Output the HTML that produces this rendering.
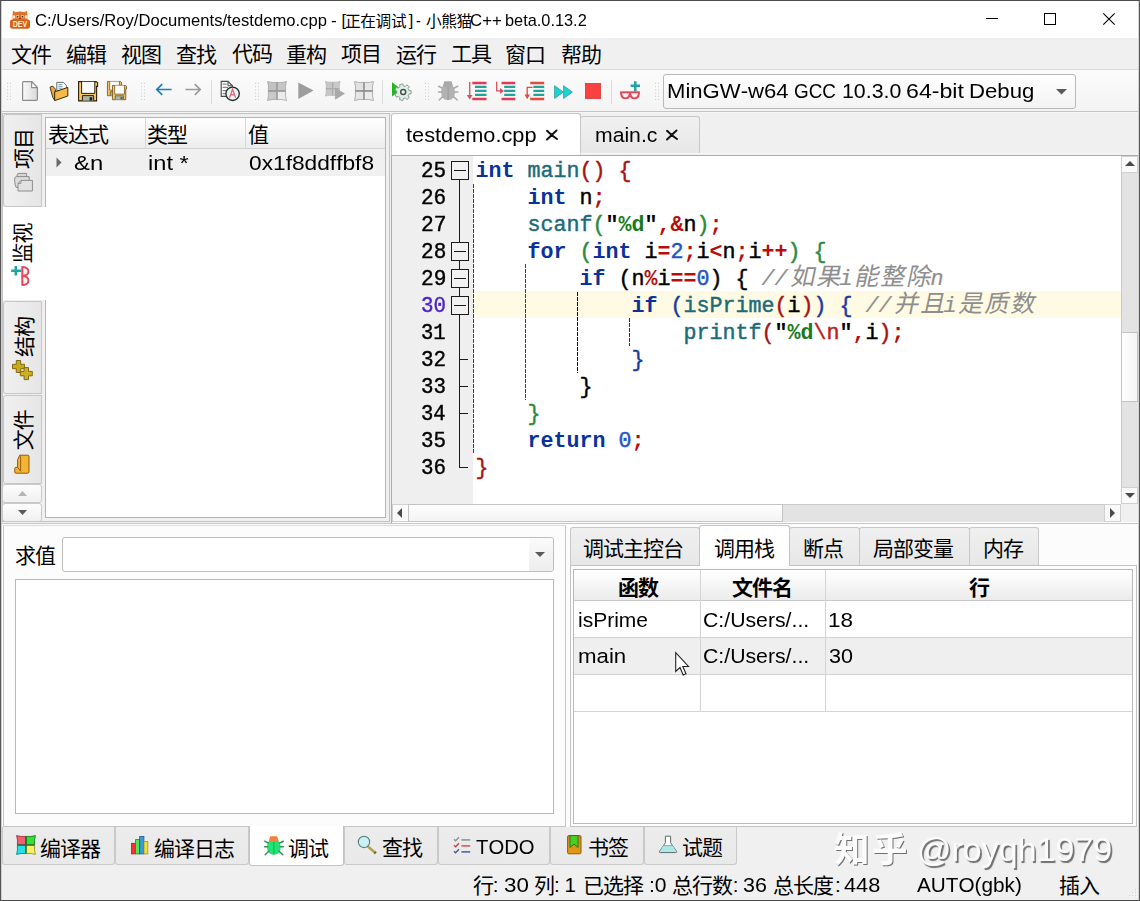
<!DOCTYPE html>
<html lang="zh"><head><meta charset="utf-8"><title>Red Panda C++</title>
<style>
html,body{margin:0;padding:0;}
body{width:1140px;height:901px;position:relative;overflow:hidden;background:#f0f0f0;font-family:"Liberation Sans",sans-serif;font-kerning:none;}
#w{position:absolute;left:0;top:0;width:1140px;height:901px;overflow:hidden;}
#w div{position:absolute;box-sizing:border-box;}
.t{position:absolute;white-space:pre;font-kerning:none;transform-origin:0 50%;}
.c{position:absolute;overflow:visible;}
.cj{font-family:"Liberation Sans","Noto Sans CJK SC",sans-serif;}
.ck{font-family:"Liberation Mono","Noto Sans CJK SC",sans-serif;}
</style></head><body>
<div id="w">
<div style="left:0px;top:0px;width:1140px;height:38px;background:#fff"></div>
<div style="left:0px;top:38px;width:1140px;height:31px;background:#f0f0f0"></div>
<div style="left:0px;top:69px;width:1140px;height:1px;background:#dadada"></div>
<div style="left:0px;top:70px;width:1140px;height:41px;background:linear-gradient(#fbfbfb,#f4f4f4)"></div>
<div style="left:0px;top:111px;width:1140px;height:1px;background:#c4c4c4"></div>
<div style="left:0px;top:112px;width:1140px;height:1px;background:#f6f6f6"></div>
<span class="t" style="left:34.96px;top:12.11px;font-size:16.4px;line-height:16.4px;transform:scaleX(1.0140);color:#000;font-family:'Liberation Sans',sans-serif;">C:/Users/Roy/Documents/testdemo.cpp</span>
<span class="t" style="left:331.24px;top:12.11px;font-size:16.4px;line-height:16.4px;transform:scaleX(1.0490);color:#000;font-family:'Liberation Sans',sans-serif;">-</span>
<span class="t" style="left:341.43px;top:12.11px;font-size:16.4px;line-height:16.4px;color:#000;font-family:'Liberation Sans',sans-serif;">[</span>
<svg class="c" style="left:345.18px;top:11.19px;" width="64.74" height="20.41" viewBox="0 -1000 4124 1300" fill="#000"><text class="cj" x="0" y="0" font-size="1000" letter-spacing="-25">正在调试</text></svg>
<span class="t" style="left:408.77px;top:12.11px;font-size:16.4px;line-height:16.4px;color:#000;font-family:'Liberation Sans',sans-serif;">]</span>
<span class="t" style="left:416.14px;top:12.11px;font-size:16.4px;line-height:16.4px;transform:scaleX(0.8991);color:#000;font-family:'Liberation Sans',sans-serif;">-</span>
<svg class="c" style="left:425.50px;top:11.31px;" width="49.44" height="20.41" viewBox="0 -1000 3149 1300" fill="#000"><text class="cj" x="0" y="0" font-size="1000" letter-spacing="-25">小熊猫</text></svg>
<span class="t" style="left:469.55px;top:12.11px;font-size:16.4px;line-height:16.4px;transform:scaleX(1.0253);color:#000;font-family:'Liberation Sans',sans-serif;">C++</span>
<span class="t" style="left:505.25px;top:12.11px;font-size:16.4px;line-height:16.4px;transform:scaleX(0.9964);color:#000;font-family:'Liberation Sans',sans-serif;">beta.0.13.2</span>
<div style="left:986px;top:18px;width:12px;height:1px;background:#000"></div>
<div style="left:1044px;top:13px;width:12px;height:12px;border:1px solid #000"></div>
<svg class="c" style="left:1103px;top:13px;" width="12" height="12" viewBox="0 0 12 12"><path d="M0.3 0.3L11.7 11.7M11.7 0.3L0.3 11.7" stroke="#000" stroke-width="1.1" fill="none"/></svg>
<svg class="c" style="left:11.24px;top:40.79px;" width="45.20" height="27.30" viewBox="0 -1000 2152 1300" fill="#000"><text class="cj" x="0" y="0" font-size="1000" letter-spacing="-48">文件</text></svg>
<svg class="c" style="left:66.20px;top:40.77px;" width="45.20" height="27.30" viewBox="0 -1000 2152 1300" fill="#000"><text class="cj" x="0" y="0" font-size="1000" letter-spacing="-48">编辑</text></svg>
<svg class="c" style="left:121.18px;top:40.60px;" width="45.20" height="27.30" viewBox="0 -1000 2152 1300" fill="#000"><text class="cj" x="0" y="0" font-size="1000" letter-spacing="-48">视图</text></svg>
<svg class="c" style="left:176.24px;top:40.64px;" width="45.20" height="27.30" viewBox="0 -1000 2152 1300" fill="#000"><text class="cj" x="0" y="0" font-size="1000" letter-spacing="-48">查找</text></svg>
<svg class="c" style="left:231.56px;top:40.43px;" width="45.20" height="27.30" viewBox="0 -1000 2152 1300" fill="#000"><text class="cj" x="0" y="0" font-size="1000" letter-spacing="-48">代码</text></svg>
<svg class="c" style="left:285.91px;top:40.64px;" width="45.20" height="27.30" viewBox="0 -1000 2152 1300" fill="#000"><text class="cj" x="0" y="0" font-size="1000" letter-spacing="-48">重构</text></svg>
<svg class="c" style="left:341.39px;top:39.72px;" width="45.20" height="27.30" viewBox="0 -1000 2152 1300" fill="#000"><text class="cj" x="0" y="0" font-size="1000" letter-spacing="-48">项目</text></svg>
<svg class="c" style="left:396.22px;top:40.66px;" width="45.20" height="27.30" viewBox="0 -1000 2152 1300" fill="#000"><text class="cj" x="0" y="0" font-size="1000" letter-spacing="-48">运行</text></svg>
<svg class="c" style="left:450.91px;top:39.63px;" width="45.20" height="27.30" viewBox="0 -1000 2152 1300" fill="#000"><text class="cj" x="0" y="0" font-size="1000" letter-spacing="-48">工具</text></svg>
<svg class="c" style="left:505.38px;top:40.74px;" width="45.20" height="27.30" viewBox="0 -1000 2152 1300" fill="#000"><text class="cj" x="0" y="0" font-size="1000" letter-spacing="-48">窗口</text></svg>
<svg class="c" style="left:560.95px;top:40.64px;" width="45.20" height="27.30" viewBox="0 -1000 2152 1300" fill="#000"><text class="cj" x="0" y="0" font-size="1000" letter-spacing="-48">帮助</text></svg>
<div style="left:663px;top:74px;width:413px;height:35px;border:1px solid #b9b9b9;border-radius:3px;background:linear-gradient(#ffffff,#f3f3f3)"></div>
<span class="t" style="left:667.19px;top:81.24px;font-size:20.5px;line-height:20.5px;transform:scaleX(1.0780);color:#000;font-family:'Liberation Sans',sans-serif;">MinGW-w64</span>
<span class="t" style="left:794.15px;top:81.24px;font-size:20.5px;line-height:20.5px;transform:scaleX(0.9213);color:#000;font-family:'Liberation Sans',sans-serif;">GCC</span>
<span class="t" style="left:841.98px;top:81.24px;font-size:20.5px;line-height:20.5px;transform:scaleX(1.0397);color:#000;font-family:'Liberation Sans',sans-serif;">10.3.0</span>
<span class="t" style="left:905.72px;top:81.24px;font-size:20.5px;line-height:20.5px;transform:scaleX(1.1300);color:#000;font-family:'Liberation Sans',sans-serif;">64-bit</span>
<span class="t" style="left:968.88px;top:81.24px;font-size:20.5px;line-height:20.5px;transform:scaleX(1.0818);color:#000;font-family:'Liberation Sans',sans-serif;">Debug</span>
<svg class="c" style="left:1056px;top:89px;" width="11" height="6" viewBox="0 0 11 6"><path d="M0 0H11L5.5 5.5Z" fill="#5a5a5a"/></svg>
<div style="left:2px;top:113px;width:388px;height:409px;border:1px solid #c2c2c2;background:#f0f0f0"></div>
<div style="left:45px;top:117px;width:341px;height:401px;border:1px solid #b4b4b4;background:#fff"></div>
<div style="left:46px;top:118px;width:339px;height:30px;background:linear-gradient(#ffffff 0%,#f9f9f9 40%,#ececec 100%)"></div>
<div style="left:46px;top:148px;width:339px;height:1px;background:#d2d2d2"></div>
<div style="left:145px;top:118px;width:1px;height:30px;background:#d8d8d8"></div>
<div style="left:245px;top:118px;width:1px;height:30px;background:#d8d8d8"></div>
<div style="left:46px;top:149px;width:339px;height:27px;background:#f0f0f0"></div>
<svg class="c" style="left:47.64px;top:120.54px;" width="65.20" height="27.30" viewBox="0 -1000 3105 1300" fill="#000"><text class="cj" x="0" y="0" font-size="1000" letter-spacing="-48">表达式</text></svg>
<svg class="c" style="left:147.03px;top:120.52px;" width="45.20" height="27.30" viewBox="0 -1000 2152 1300" fill="#000"><text class="cj" x="0" y="0" font-size="1000" letter-spacing="-48">类型</text></svg>
<svg class="c" style="left:248.33px;top:120.54px;" width="25.20" height="27.30" viewBox="0 -1000 1200 1300" fill="#000"><text class="cj" x="0" y="0" font-size="1000">值</text></svg>
<svg class="c" style="left:56px;top:157px;" width="6" height="11" viewBox="0 0 6 11"><path d="M0.5 0.5L5.5 5.5L0.5 10.5Z" fill="#6a6a6a"/></svg>
<span class="t" style="left:74.16px;top:152.84px;font-size:20.5px;line-height:20.5px;transform:scaleX(1.1641);color:#000;font-family:'Liberation Sans',sans-serif;">&amp;n</span>
<span class="t" style="left:147.52px;top:152.84px;font-size:20.5px;line-height:20.5px;transform:scaleX(1.1536);color:#000;font-family:'Liberation Sans',sans-serif;">int *</span>
<span class="t" style="left:249.01px;top:152.84px;font-size:20.5px;line-height:20.5px;transform:scaleX(1.1084);color:#000;font-family:'Liberation Sans',sans-serif;">0x1f8ddffbf8</span>
<div style="left:3px;top:114px;width:39px;height:93px;background:linear-gradient(90deg,#f0f0f0,#e6e6e6);border:1px solid #c6c6c6;border-radius:3px 0 0 3px"></div>
<div style="left:2px;top:207px;width:44px;height:93px;background:#fff;border-left:1px solid #c2c2c2"></div>
<div style="left:3px;top:301px;width:39px;height:93px;background:linear-gradient(90deg,#f0f0f0,#e6e6e6);border:1px solid #c6c6c6;border-radius:3px 0 0 3px"></div>
<div style="left:3px;top:395px;width:39px;height:89px;background:linear-gradient(90deg,#f0f0f0,#e6e6e6);border:1px solid #c6c6c6;border-radius:3px 0 0 3px"></div>
<svg class="c" style="left:0;top:0" width="50" height="530" fill="#000"><text class="cj" transform="translate(31.02,169.08) rotate(-90)" font-size="21" letter-spacing="-1">项目</text></svg>
<svg class="c" style="left:0;top:0" width="50" height="530" fill="#000"><text class="cj" transform="translate(30.10,263.56) rotate(-90)" font-size="21" letter-spacing="-1">监视</text></svg>
<svg class="c" style="left:0;top:0" width="50" height="530" fill="#000"><text class="cj" transform="translate(31.66,357.00) rotate(-90)" font-size="21" letter-spacing="-1">结构</text></svg>
<svg class="c" style="left:0;top:0" width="50" height="530" fill="#000"><text class="cj" transform="translate(31.39,450.31) rotate(-90)" font-size="21" letter-spacing="-1">文件</text></svg>
<div style="left:2px;top:484px;width:40px;height:19px;border:1px solid #c9c9c9;border-radius:3px;background:linear-gradient(#fdfdfd,#f0f0f0)"></div>
<div style="left:2px;top:503px;width:40px;height:19px;border:1px solid #c9c9c9;border-radius:3px;background:linear-gradient(#fdfdfd,#f0f0f0)"></div>
<svg class="c" style="left:17.5px;top:490.5px;" width="9" height="5" viewBox="0 0 9 5"><path d="M0 5H9L4.5 0Z" fill="#b4b4b4"/></svg>
<svg class="c" style="left:18px;top:509.5px;" width="9" height="5" viewBox="0 0 9 5"><path d="M0 0H9L4.5 5Z" fill="#5a5a5a"/></svg>
<div style="left:391px;top:113px;width:190px;height:43px;background:#fff;border:1px solid #c4c4c4;border-bottom:none;border-radius:3px 3px 0 0"></div>
<div style="left:580px;top:116px;width:120px;height:38px;background:linear-gradient(#f0f0f0,#e7e7e7);border:1px solid #c8c8c8;border-bottom:none;border-radius:3px 3px 0 0"></div>
<div style="left:580px;top:153px;width:560px;height:1px;background:#f4f4f4"></div>
<span class="t" style="left:406.37px;top:125.14px;font-size:20.5px;line-height:20.5px;transform:scaleX(1.0607);color:#000;font-family:'Liberation Sans',sans-serif;">testdemo.cpp</span>
<span class="t" style="left:594.59px;top:125.14px;font-size:20.5px;line-height:20.5px;transform:scaleX(1.0329);color:#000;font-family:'Liberation Sans',sans-serif;">main.c</span>
<svg class="c" style="left:546px;top:129.5px;" width="12" height="10" viewBox="0 0 12 10"><path d="M1 0.8C4 3.5 7 6.5 11 9M10.5 0.5C7.5 3 4.5 6.5 1 9.5" stroke="#111" stroke-width="2" fill="none" stroke-linecap="round"/></svg>
<svg class="c" style="left:666px;top:129.5px;" width="12" height="10" viewBox="0 0 12 10"><path d="M1 0.8C4 3.5 7 6.5 11 9M10.5 0.5C7.5 3 4.5 6.5 1 9.5" stroke="#111" stroke-width="2" fill="none" stroke-linecap="round"/></svg>
<div style="left:391px;top:155px;width:748px;height:368px;border:1px solid #adadad;border-right:none;border-bottom:none;background:#fff"></div>
<div style="left:392px;top:156px;width:81px;height:348px;background:#efefef"></div>
<div style="left:474px;top:291px;width:647px;height:27px;background:#fffae3"></div>
<div style="left:1121px;top:156px;width:17px;height:348px;background:#e3e3e3;border-left:1px solid #c9c9c9"></div>
<div style="left:1121px;top:156px;width:17px;height:17px;background:#fafafa;border:1px solid #d0d0d0"></div>
<div style="left:1121px;top:487px;width:17px;height:17px;background:#fafafa;border:1px solid #d0d0d0"></div>
<div style="left:1121px;top:332px;width:17px;height:70px;background:linear-gradient(90deg,#ffffff,#f4f4f4);border:1px solid #c4c4c4"></div>
<svg class="c" style="left:1125px;top:161px;" width="10" height="5" viewBox="0 0 10 5"><path d="M0 5H10L5 0Z" fill="#4a4a4a"/></svg>
<svg class="c" style="left:1125px;top:493px;" width="10" height="5" viewBox="0 0 10 5"><path d="M0 0H10L5 5Z" fill="#4a4a4a"/></svg>
<div style="left:392px;top:504px;width:729px;height:18px;background:#e3e3e3;border-top:1px solid #c9c9c9"></div>
<div style="left:392px;top:504px;width:17px;height:18px;background:#fafafa;border:1px solid #d0d0d0"></div>
<div style="left:1104px;top:504px;width:17px;height:18px;background:#fafafa;border:1px solid #d0d0d0"></div>
<div style="left:408px;top:504px;width:375px;height:18px;background:linear-gradient(#ffffff,#f3f3f3);border:1px solid #c4c4c4"></div>
<svg class="c" style="left:397px;top:508px;" width="5" height="10" viewBox="0 0 5 10"><path d="M5 0V10L0 5Z" fill="#4a4a4a"/></svg>
<svg class="c" style="left:1110px;top:508px;" width="5" height="10" viewBox="0 0 5 10"><path d="M0 0V10L5 5Z" fill="#4a4a4a"/></svg>
<div style="left:1121px;top:504px;width:17px;height:18px;background:#f0f0f0"></div>
<span class="t" style="left:421.12px;top:160.70px;font-size:21.667px;line-height:21.667px;transform:scaleX(0.9695);color:#000;font-family:'Liberation Mono',monospace;-webkit-text-stroke:0.4px;">25</span>
<span class="t" style="left:421.12px;top:187.70px;font-size:21.667px;line-height:21.667px;transform:scaleX(0.9708);color:#000;font-family:'Liberation Mono',monospace;-webkit-text-stroke:0.4px;">26</span>
<span class="t" style="left:421.10px;top:214.70px;font-size:21.667px;line-height:21.667px;transform:scaleX(0.9830);color:#000;font-family:'Liberation Mono',monospace;-webkit-text-stroke:0.4px;">27</span>
<span class="t" style="left:421.12px;top:241.70px;font-size:21.667px;line-height:21.667px;transform:scaleX(0.9717);color:#000;font-family:'Liberation Mono',monospace;-webkit-text-stroke:0.4px;">28</span>
<span class="t" style="left:421.11px;top:268.70px;font-size:21.667px;line-height:21.667px;transform:scaleX(0.9748);color:#000;font-family:'Liberation Mono',monospace;-webkit-text-stroke:0.4px;">29</span>
<span class="t" style="left:421.30px;top:295.70px;font-size:21.667px;line-height:21.667px;transform:scaleX(0.9607);color:#4a1fc8;font-family:'Liberation Mono',monospace;-webkit-text-stroke:0.4px;">30</span>
<span class="t" style="left:421.31px;top:322.70px;font-size:21.667px;line-height:21.667px;transform:scaleX(0.9490);color:#000;font-family:'Liberation Mono',monospace;-webkit-text-stroke:0.4px;">31</span>
<span class="t" style="left:421.29px;top:349.70px;font-size:21.667px;line-height:21.667px;transform:scaleX(0.9690);color:#000;font-family:'Liberation Mono',monospace;-webkit-text-stroke:0.4px;">32</span>
<span class="t" style="left:421.30px;top:376.70px;font-size:21.667px;line-height:21.667px;transform:scaleX(0.9624);color:#000;font-family:'Liberation Mono',monospace;-webkit-text-stroke:0.4px;">33</span>
<span class="t" style="left:421.31px;top:403.70px;font-size:21.667px;line-height:21.667px;transform:scaleX(0.9512);color:#000;font-family:'Liberation Mono',monospace;-webkit-text-stroke:0.4px;">34</span>
<span class="t" style="left:421.30px;top:430.70px;font-size:21.667px;line-height:21.667px;transform:scaleX(0.9624);color:#000;font-family:'Liberation Mono',monospace;-webkit-text-stroke:0.4px;">35</span>
<span class="t" style="left:421.29px;top:457.70px;font-size:21.667px;line-height:21.667px;transform:scaleX(0.9637);color:#000;font-family:'Liberation Mono',monospace;-webkit-text-stroke:0.4px;">36</span>
<div style="left:459px;top:180px;width:1px;height:288px;background:#1a1a1a"></div>
<div style="left:451px;top:161px;width:18px;height:19px;border:1px solid #1a1a1a;background:#f1f1f1"></div>
<div style="left:454px;top:170px;width:12px;height:1px;background:#1a1a1a"></div>
<div style="left:451px;top:242px;width:18px;height:19px;border:1px solid #1a1a1a;background:#f1f1f1"></div>
<div style="left:454px;top:251px;width:12px;height:1px;background:#1a1a1a"></div>
<div style="left:451px;top:269px;width:18px;height:19px;border:1px solid #1a1a1a;background:#f1f1f1"></div>
<div style="left:454px;top:278px;width:12px;height:1px;background:#1a1a1a"></div>
<div style="left:451px;top:296px;width:18px;height:19px;border:1px solid #1a1a1a;background:#f1f1f1"></div>
<div style="left:454px;top:305px;width:12px;height:1px;background:#1a1a1a"></div>
<div style="left:460px;top:359px;width:8px;height:1px;background:#1a1a1a"></div>
<div style="left:460px;top:386px;width:8px;height:1px;background:#1a1a1a"></div>
<div style="left:460px;top:413px;width:8px;height:1px;background:#1a1a1a"></div>
<div style="left:460px;top:467px;width:8px;height:1px;background:#1a1a1a"></div>
<div style="left:473px;top:184px;width:1px;height:270px;background:repeating-linear-gradient(#85202c 0 3.8px,transparent 3.8px 5px)"></div>
<div style="left:525px;top:264px;width:1px;height:136px;background:repeating-linear-gradient(#1f5a2f 0 3.8px,transparent 3.8px 5px)"></div>
<div style="left:577px;top:292px;width:1px;height:81px;background:repeating-linear-gradient(#111 0 3.8px,transparent 3.8px 5px)"></div>
<div style="left:629px;top:318px;width:1px;height:28px;background:repeating-linear-gradient(#1a2f7a 0 3.8px,transparent 3.8px 5px)"></div>
<span class="t" style="left:475.60px;top:160.70px;font-size:21.667px;line-height:21.667px;color:#0a329a;font-family:'Liberation Mono',monospace;font-weight:bold;">int</span>
<span class="t" style="left:527.60px;top:160.70px;font-size:21.667px;line-height:21.667px;color:#1b6b7a;font-family:'Liberation Mono',monospace;-webkit-text-stroke:0.45px;">main</span>
<span class="t" style="left:579.60px;top:160.70px;font-size:21.667px;line-height:21.667px;color:#a31515;font-family:'Liberation Mono',monospace;-webkit-text-stroke:0.45px;">()</span>
<span class="t" style="left:618.60px;top:160.70px;font-size:21.667px;line-height:21.667px;color:#a31515;font-family:'Liberation Mono',monospace;-webkit-text-stroke:0.45px;">{</span>
<span class="t" style="left:527.60px;top:187.70px;font-size:21.667px;line-height:21.667px;color:#0a329a;font-family:'Liberation Mono',monospace;font-weight:bold;">int</span>
<span class="t" style="left:579.60px;top:187.70px;font-size:21.667px;line-height:21.667px;color:#000;font-family:'Liberation Mono',monospace;-webkit-text-stroke:0.45px;">n</span>
<span class="t" style="left:592.60px;top:187.70px;font-size:21.667px;line-height:21.667px;color:#b80d0d;font-family:'Liberation Mono',monospace;font-weight:bold;">;</span>
<span class="t" style="left:527.60px;top:214.70px;font-size:21.667px;line-height:21.667px;color:#1b6b7a;font-family:'Liberation Mono',monospace;-webkit-text-stroke:0.45px;">scanf</span>
<span class="t" style="left:592.60px;top:214.70px;font-size:21.667px;line-height:21.667px;color:#2a8a3e;font-family:'Liberation Mono',monospace;-webkit-text-stroke:0.45px;">(</span>
<span class="t" style="left:605.60px;top:214.70px;font-size:21.667px;line-height:21.667px;color:#000;font-family:'Liberation Mono',monospace;font-weight:bold;">&quot;</span>
<span class="t" style="left:618.60px;top:214.70px;font-size:21.667px;line-height:21.667px;color:#1a7a1a;font-family:'Liberation Mono',monospace;font-weight:bold;">%d</span>
<span class="t" style="left:644.60px;top:214.70px;font-size:21.667px;line-height:21.667px;color:#000;font-family:'Liberation Mono',monospace;font-weight:bold;">&quot;</span>
<span class="t" style="left:657.60px;top:214.70px;font-size:21.667px;line-height:21.667px;color:#b80d0d;font-family:'Liberation Mono',monospace;font-weight:bold;">,&amp;</span>
<span class="t" style="left:683.60px;top:214.70px;font-size:21.667px;line-height:21.667px;color:#000;font-family:'Liberation Mono',monospace;-webkit-text-stroke:0.45px;">n</span>
<span class="t" style="left:696.60px;top:214.70px;font-size:21.667px;line-height:21.667px;color:#2a8a3e;font-family:'Liberation Mono',monospace;-webkit-text-stroke:0.45px;">)</span>
<span class="t" style="left:709.60px;top:214.70px;font-size:21.667px;line-height:21.667px;color:#b80d0d;font-family:'Liberation Mono',monospace;font-weight:bold;">;</span>
<span class="t" style="left:527.60px;top:241.70px;font-size:21.667px;line-height:21.667px;color:#0a329a;font-family:'Liberation Mono',monospace;font-weight:bold;">for</span>
<span class="t" style="left:579.60px;top:241.70px;font-size:21.667px;line-height:21.667px;color:#2a8a3e;font-family:'Liberation Mono',monospace;-webkit-text-stroke:0.45px;">(</span>
<span class="t" style="left:592.60px;top:241.70px;font-size:21.667px;line-height:21.667px;color:#0a329a;font-family:'Liberation Mono',monospace;font-weight:bold;">int</span>
<span class="t" style="left:644.60px;top:241.70px;font-size:21.667px;line-height:21.667px;color:#000;font-family:'Liberation Mono',monospace;-webkit-text-stroke:0.45px;">i</span>
<span class="t" style="left:657.60px;top:241.70px;font-size:21.667px;line-height:21.667px;color:#b80d0d;font-family:'Liberation Mono',monospace;font-weight:bold;">=</span>
<span class="t" style="left:670.60px;top:241.70px;font-size:21.667px;line-height:21.667px;color:#2453c4;font-family:'Liberation Mono',monospace;-webkit-text-stroke:0.45px;">2</span>
<span class="t" style="left:683.60px;top:241.70px;font-size:21.667px;line-height:21.667px;color:#b80d0d;font-family:'Liberation Mono',monospace;font-weight:bold;">;</span>
<span class="t" style="left:696.60px;top:241.70px;font-size:21.667px;line-height:21.667px;color:#000;font-family:'Liberation Mono',monospace;-webkit-text-stroke:0.45px;">i</span>
<span class="t" style="left:709.60px;top:241.70px;font-size:21.667px;line-height:21.667px;color:#b80d0d;font-family:'Liberation Mono',monospace;font-weight:bold;">&lt;</span>
<span class="t" style="left:722.60px;top:241.70px;font-size:21.667px;line-height:21.667px;color:#000;font-family:'Liberation Mono',monospace;-webkit-text-stroke:0.45px;">n</span>
<span class="t" style="left:735.60px;top:241.70px;font-size:21.667px;line-height:21.667px;color:#b80d0d;font-family:'Liberation Mono',monospace;font-weight:bold;">;</span>
<span class="t" style="left:748.60px;top:241.70px;font-size:21.667px;line-height:21.667px;color:#000;font-family:'Liberation Mono',monospace;-webkit-text-stroke:0.45px;">i</span>
<span class="t" style="left:761.60px;top:241.70px;font-size:21.667px;line-height:21.667px;color:#b80d0d;font-family:'Liberation Mono',monospace;font-weight:bold;">++</span>
<span class="t" style="left:787.60px;top:241.70px;font-size:21.667px;line-height:21.667px;color:#2a8a3e;font-family:'Liberation Mono',monospace;-webkit-text-stroke:0.45px;">)</span>
<span class="t" style="left:813.60px;top:241.70px;font-size:21.667px;line-height:21.667px;color:#2a8a3e;font-family:'Liberation Mono',monospace;-webkit-text-stroke:0.45px;">{</span>
<span class="t" style="left:579.60px;top:268.70px;font-size:21.667px;line-height:21.667px;color:#0a329a;font-family:'Liberation Mono',monospace;font-weight:bold;">if</span>
<span class="t" style="left:618.60px;top:268.70px;font-size:21.667px;line-height:21.667px;color:#000;font-family:'Liberation Mono',monospace;-webkit-text-stroke:0.45px;">(</span>
<span class="t" style="left:631.60px;top:268.70px;font-size:21.667px;line-height:21.667px;color:#000;font-family:'Liberation Mono',monospace;-webkit-text-stroke:0.45px;">n</span>
<span class="t" style="left:644.60px;top:268.70px;font-size:21.667px;line-height:21.667px;color:#b80d0d;font-family:'Liberation Mono',monospace;font-weight:bold;">%</span>
<span class="t" style="left:657.60px;top:268.70px;font-size:21.667px;line-height:21.667px;color:#000;font-family:'Liberation Mono',monospace;-webkit-text-stroke:0.45px;">i</span>
<span class="t" style="left:670.60px;top:268.70px;font-size:21.667px;line-height:21.667px;color:#b80d0d;font-family:'Liberation Mono',monospace;font-weight:bold;">==</span>
<span class="t" style="left:696.60px;top:268.70px;font-size:21.667px;line-height:21.667px;color:#2453c4;font-family:'Liberation Mono',monospace;-webkit-text-stroke:0.45px;">0</span>
<span class="t" style="left:709.60px;top:268.70px;font-size:21.667px;line-height:21.667px;color:#000;font-family:'Liberation Mono',monospace;-webkit-text-stroke:0.45px;">)</span>
<span class="t" style="left:735.60px;top:268.70px;font-size:21.667px;line-height:21.667px;color:#000;font-family:'Liberation Mono',monospace;-webkit-text-stroke:0.45px;">{</span>
<span class="t" style="left:761.60px;top:268.70px;font-size:21.667px;line-height:21.667px;color:#8e8e8e;font-family:'Liberation Mono',monospace;font-style:italic;-webkit-text-stroke:0.2px;">//</span>
<svg class="c" style="left:789.75px;top:261.40px;" width="55.28" height="31.72" viewBox="0 -1000 2266 1300" fill="#8e8e8e"><g transform="skewX(-12)"><text class="ck" x="0" y="0" font-size="1000" letter-spacing="66">如果</text></g></svg>
<span class="t" style="left:839.60px;top:268.70px;font-size:21.667px;line-height:21.667px;color:#8e8e8e;font-family:'Liberation Mono',monospace;font-style:italic;-webkit-text-stroke:0.2px;">i</span>
<svg class="c" style="left:854.26px;top:261.40px;" width="81.28" height="31.72" viewBox="0 -1000 3331 1300" fill="#8e8e8e"><g transform="skewX(-12)"><text class="ck" x="0" y="0" font-size="1000" letter-spacing="66">能整除</text></g></svg>
<span class="t" style="left:930.60px;top:268.70px;font-size:21.667px;line-height:21.667px;color:#8e8e8e;font-family:'Liberation Mono',monospace;font-style:italic;-webkit-text-stroke:0.2px;">n</span>
<span class="t" style="left:631.60px;top:295.70px;font-size:21.667px;line-height:21.667px;color:#0a329a;font-family:'Liberation Mono',monospace;font-weight:bold;">if</span>
<span class="t" style="left:670.60px;top:295.70px;font-size:21.667px;line-height:21.667px;color:#1a3a9e;font-family:'Liberation Mono',monospace;-webkit-text-stroke:0.45px;">(</span>
<span class="t" style="left:683.60px;top:295.70px;font-size:21.667px;line-height:21.667px;color:#1b6b7a;font-family:'Liberation Mono',monospace;-webkit-text-stroke:0.45px;">isPrime</span>
<span class="t" style="left:774.60px;top:295.70px;font-size:21.667px;line-height:21.667px;color:#a31515;font-family:'Liberation Mono',monospace;-webkit-text-stroke:0.45px;">(</span>
<span class="t" style="left:787.60px;top:295.70px;font-size:21.667px;line-height:21.667px;color:#000;font-family:'Liberation Mono',monospace;-webkit-text-stroke:0.45px;">i</span>
<span class="t" style="left:800.60px;top:295.70px;font-size:21.667px;line-height:21.667px;color:#a31515;font-family:'Liberation Mono',monospace;-webkit-text-stroke:0.45px;">)</span>
<span class="t" style="left:813.60px;top:295.70px;font-size:21.667px;line-height:21.667px;color:#1a3a9e;font-family:'Liberation Mono',monospace;-webkit-text-stroke:0.45px;">)</span>
<span class="t" style="left:839.60px;top:295.70px;font-size:21.667px;line-height:21.667px;color:#1a3a9e;font-family:'Liberation Mono',monospace;-webkit-text-stroke:0.45px;">{</span>
<span class="t" style="left:865.60px;top:295.70px;font-size:21.667px;line-height:21.667px;color:#8e8e8e;font-family:'Liberation Mono',monospace;font-style:italic;-webkit-text-stroke:0.2px;">//</span>
<svg class="c" style="left:893.58px;top:288.40px;" width="55.28" height="31.72" viewBox="0 -1000 2266 1300" fill="#8e8e8e"><g transform="skewX(-12)"><text class="ck" x="0" y="0" font-size="1000" letter-spacing="66">并且</text></g></svg>
<span class="t" style="left:943.60px;top:295.70px;font-size:21.667px;line-height:21.667px;color:#8e8e8e;font-family:'Liberation Mono',monospace;font-style:italic;-webkit-text-stroke:0.2px;">i</span>
<svg class="c" style="left:958.43px;top:288.40px;" width="81.28" height="31.72" viewBox="0 -1000 3331 1300" fill="#8e8e8e"><g transform="skewX(-12)"><text class="ck" x="0" y="0" font-size="1000" letter-spacing="66">是质数</text></g></svg>
<span class="t" style="left:683.60px;top:322.70px;font-size:21.667px;line-height:21.667px;color:#1b6b7a;font-family:'Liberation Mono',monospace;-webkit-text-stroke:0.45px;">printf</span>
<span class="t" style="left:761.60px;top:322.70px;font-size:21.667px;line-height:21.667px;color:#a31515;font-family:'Liberation Mono',monospace;-webkit-text-stroke:0.45px;">(</span>
<span class="t" style="left:774.60px;top:322.70px;font-size:21.667px;line-height:21.667px;color:#000;font-family:'Liberation Mono',monospace;font-weight:bold;">&quot;</span>
<span class="t" style="left:787.60px;top:322.70px;font-size:21.667px;line-height:21.667px;color:#1a7a1a;font-family:'Liberation Mono',monospace;font-weight:bold;">%d</span>
<span class="t" style="left:813.60px;top:322.70px;font-size:21.667px;line-height:21.667px;color:#c41a1a;font-family:'Liberation Mono',monospace;-webkit-text-stroke:0.45px;">\n</span>
<span class="t" style="left:839.60px;top:322.70px;font-size:21.667px;line-height:21.667px;color:#000;font-family:'Liberation Mono',monospace;font-weight:bold;">&quot;</span>
<span class="t" style="left:852.60px;top:322.70px;font-size:21.667px;line-height:21.667px;color:#b80d0d;font-family:'Liberation Mono',monospace;font-weight:bold;">,</span>
<span class="t" style="left:865.60px;top:322.70px;font-size:21.667px;line-height:21.667px;color:#000;font-family:'Liberation Mono',monospace;-webkit-text-stroke:0.45px;">i</span>
<span class="t" style="left:878.60px;top:322.70px;font-size:21.667px;line-height:21.667px;color:#a31515;font-family:'Liberation Mono',monospace;-webkit-text-stroke:0.45px;">)</span>
<span class="t" style="left:891.60px;top:322.70px;font-size:21.667px;line-height:21.667px;color:#b80d0d;font-family:'Liberation Mono',monospace;font-weight:bold;">;</span>
<span class="t" style="left:631.60px;top:349.70px;font-size:21.667px;line-height:21.667px;color:#1a3a9e;font-family:'Liberation Mono',monospace;-webkit-text-stroke:0.45px;">}</span>
<span class="t" style="left:579.60px;top:376.70px;font-size:21.667px;line-height:21.667px;color:#000;font-family:'Liberation Mono',monospace;-webkit-text-stroke:0.45px;">}</span>
<span class="t" style="left:527.60px;top:403.70px;font-size:21.667px;line-height:21.667px;color:#2a8a3e;font-family:'Liberation Mono',monospace;-webkit-text-stroke:0.45px;">}</span>
<span class="t" style="left:527.60px;top:430.70px;font-size:21.667px;line-height:21.667px;color:#0a329a;font-family:'Liberation Mono',monospace;font-weight:bold;">return</span>
<span class="t" style="left:618.60px;top:430.70px;font-size:21.667px;line-height:21.667px;color:#2453c4;font-family:'Liberation Mono',monospace;-webkit-text-stroke:0.45px;">0</span>
<span class="t" style="left:631.60px;top:430.70px;font-size:21.667px;line-height:21.667px;color:#b80d0d;font-family:'Liberation Mono',monospace;font-weight:bold;">;</span>
<span class="t" style="left:475.60px;top:457.70px;font-size:21.667px;line-height:21.667px;color:#a31515;font-family:'Liberation Mono',monospace;-webkit-text-stroke:0.45px;">}</span>
<div style="left:0px;top:523px;width:1140px;height:1px;background:#c6c6c6"></div>
<div style="left:2px;top:524px;width:1136px;height:303px;background:#fcfcfc"></div>
<div style="left:3px;top:525px;width:563px;height:302px;border:1px solid #c6c6c6;border-top-color:#dcdcdc;background:#fcfcfc"></div>
<svg class="c" style="left:14.50px;top:542.24px;" width="45.20" height="27.30" viewBox="0 -1000 2152 1300" fill="#000"><text class="cj" x="0" y="0" font-size="1000" letter-spacing="-48">求值</text></svg>
<div style="left:62px;top:537px;width:492px;height:35px;border:1px solid #bdbdbd;border-radius:3px;background:#fff"></div>
<div style="left:529px;top:538px;width:24px;height:33px;background:linear-gradient(#fbfbfb,#ededed);border-radius:0 3px 3px 0"></div>
<svg class="c" style="left:535px;top:552px;" width="10" height="5" viewBox="0 0 10 5"><path d="M0 0H10L5 5Z" fill="#5a5a5a"/></svg>
<div style="left:15px;top:579px;width:539px;height:235px;border:1px solid #b9b9b9;background:#fff"></div>
<div style="left:570px;top:565px;width:567px;height:262px;border:1px solid #c2c2c2;background:#fdfdfd"></div>
<div style="left:570px;top:527px;width:130px;height:38px;background:linear-gradient(#f0f0f0,#e7e7e7);border:1px solid #c8c8c8;border-bottom:none;border-radius:3px 3px 0 0"></div>
<div style="left:789px;top:527px;width:71px;height:38px;background:linear-gradient(#f0f0f0,#e7e7e7);border:1px solid #c8c8c8;border-bottom:none;border-radius:3px 3px 0 0"></div>
<div style="left:859px;top:527px;width:111px;height:38px;background:linear-gradient(#f0f0f0,#e7e7e7);border:1px solid #c8c8c8;border-bottom:none;border-radius:3px 3px 0 0"></div>
<div style="left:969px;top:527px;width:70px;height:38px;background:linear-gradient(#f0f0f0,#e7e7e7);border:1px solid #c8c8c8;border-bottom:none;border-radius:3px 3px 0 0"></div>
<div style="left:699px;top:525px;width:91px;height:41px;background:#fff;border:1px solid #c4c4c4;border-bottom:none;border-radius:3px 3px 0 0"></div>
<svg class="c" style="left:583.30px;top:534.72px;" width="105.20" height="27.30" viewBox="0 -1000 5010 1300" fill="#000"><text class="cj" x="0" y="0" font-size="1000" letter-spacing="-48">调试主控台</text></svg>
<svg class="c" style="left:714.30px;top:534.94px;" width="65.20" height="27.30" viewBox="0 -1000 3105 1300" fill="#000"><text class="cj" x="0" y="0" font-size="1000" letter-spacing="-48">调用栈</text></svg>
<svg class="c" style="left:802.84px;top:534.98px;" width="45.20" height="27.30" viewBox="0 -1000 2152 1300" fill="#000"><text class="cj" x="0" y="0" font-size="1000" letter-spacing="-48">断点</text></svg>
<svg class="c" style="left:873.21px;top:535.13px;" width="85.20" height="27.30" viewBox="0 -1000 4057 1300" fill="#000"><text class="cj" x="0" y="0" font-size="1000" letter-spacing="-48">局部变量</text></svg>
<svg class="c" style="left:982.62px;top:534.94px;" width="45.20" height="27.30" viewBox="0 -1000 2152 1300" fill="#000"><text class="cj" x="0" y="0" font-size="1000" letter-spacing="-48">内存</text></svg>
<div style="left:573px;top:569px;width:560px;height:255px;border:1px solid #b9b9b9;background:#fff"></div>
<div style="left:574px;top:570px;width:558px;height:30px;background:linear-gradient(#ffffff 0%,#f8f8f8 40%,#ebebeb 100%)"></div>
<div style="left:574px;top:600px;width:558px;height:1px;background:#c9c9c9"></div>
<div style="left:574px;top:638px;width:558px;height:36px;background:#efefef"></div>
<div style="left:574px;top:637px;width:558px;height:1px;background:#d4d4d4"></div>
<div style="left:574px;top:674px;width:558px;height:1px;background:#d4d4d4"></div>
<div style="left:574px;top:711px;width:558px;height:1px;background:#d4d4d4"></div>
<div style="left:700px;top:570px;width:1px;height:142px;background:#d4d4d4"></div>
<div style="left:825px;top:570px;width:1px;height:142px;background:#d4d4d4"></div>
<svg class="c" style="left:617.73px;top:573.85px;" width="45.20" height="27.30" viewBox="0 -1000 2152 1300" fill="#000"><text class="cj" x="0" y="0" font-size="1000" font-weight="bold" letter-spacing="-48">函数</text></svg>
<svg class="c" style="left:732.48px;top:574.06px;" width="65.20" height="27.30" viewBox="0 -1000 3105 1300" fill="#000"><text class="cj" x="0" y="0" font-size="1000" font-weight="bold" letter-spacing="-48">文件名</text></svg>
<svg class="c" style="left:969.18px;top:573.85px;" width="25.20" height="27.30" viewBox="0 -1000 1200 1300" fill="#000"><text class="cj" x="0" y="0" font-size="1000" font-weight="bold">行</text></svg>
<span class="t" style="left:578.29px;top:609.54px;font-size:20.5px;line-height:20.5px;transform:scaleX(1.0249);color:#000;font-family:'Liberation Sans',sans-serif;">isPrime</span>
<span class="t" style="left:578.22px;top:646.44px;font-size:20.5px;line-height:20.5px;transform:scaleX(1.0853);color:#000;font-family:'Liberation Sans',sans-serif;">main</span>
<span class="t" style="left:703.12px;top:609.54px;font-size:20.5px;line-height:20.5px;transform:scaleX(1.0362);color:#000;font-family:'Liberation Sans',sans-serif;">C:/Users/...</span>
<span class="t" style="left:703.12px;top:646.44px;font-size:20.5px;line-height:20.5px;transform:scaleX(1.0362);color:#000;font-family:'Liberation Sans',sans-serif;">C:/Users/...</span>
<span class="t" style="left:827.99px;top:609.54px;font-size:20.5px;line-height:20.5px;transform:scaleX(1.0958);color:#000;font-family:'Liberation Sans',sans-serif;">18</span>
<span class="t" style="left:828.88px;top:646.44px;font-size:20.5px;line-height:20.5px;transform:scaleX(1.0509);color:#000;font-family:'Liberation Sans',sans-serif;">30</span>
<svg class="c" style="left:675px;top:652px;" width="16" height="25" viewBox="0 0 16 25"><path d="M0.7 0.7V19.5L5 15.5L8.2 23L11 21.8L7.8 14.5H13.5Z" fill="#fff" stroke="#222" stroke-width="1.1" stroke-linejoin="miter"/></svg>
<div style="left:2px;top:827px;width:113px;height:38px;background:linear-gradient(#ececec,#e9e9e9);border:1px solid #c9c9c9;border-top:none;border-radius:0 0 3px 3px"></div>
<div style="left:115px;top:827px;width:134px;height:38px;background:linear-gradient(#ececec,#e9e9e9);border:1px solid #c9c9c9;border-top:none;border-radius:0 0 3px 3px"></div>
<div style="left:344px;top:827px;width:94px;height:38px;background:linear-gradient(#ececec,#e9e9e9);border:1px solid #c9c9c9;border-top:none;border-radius:0 0 3px 3px"></div>
<div style="left:438px;top:827px;width:112px;height:38px;background:linear-gradient(#ececec,#e9e9e9);border:1px solid #c9c9c9;border-top:none;border-radius:0 0 3px 3px"></div>
<div style="left:550px;top:827px;width:94px;height:38px;background:linear-gradient(#ececec,#e9e9e9);border:1px solid #c9c9c9;border-top:none;border-radius:0 0 3px 3px"></div>
<div style="left:644px;top:827px;width:93px;height:38px;background:linear-gradient(#ececec,#e9e9e9);border:1px solid #c9c9c9;border-top:none;border-radius:0 0 3px 3px"></div>
<div style="left:249px;top:826px;width:95px;height:40px;background:#fff;border:1px solid #c4c4c4;border-top:none;border-radius:0 0 3px 3px"></div>
<svg class="c" style="left:39.60px;top:834.67px;" width="65.20" height="27.30" viewBox="0 -1000 3105 1300" fill="#000"><text class="cj" x="0" y="0" font-size="1000" letter-spacing="-48">编译器</text></svg>
<svg class="c" style="left:153.60px;top:834.67px;" width="85.20" height="27.30" viewBox="0 -1000 4057 1300" fill="#000"><text class="cj" x="0" y="0" font-size="1000" letter-spacing="-48">编译日志</text></svg>
<svg class="c" style="left:288.10px;top:835.13px;" width="45.20" height="27.30" viewBox="0 -1000 2152 1300" fill="#000"><text class="cj" x="0" y="0" font-size="1000" letter-spacing="-48">调试</text></svg>
<svg class="c" style="left:381.54px;top:833.94px;" width="45.20" height="27.30" viewBox="0 -1000 2152 1300" fill="#000"><text class="cj" x="0" y="0" font-size="1000" letter-spacing="-48">查找</text></svg>
<span class="t" style="left:475.94px;top:836.84px;font-size:20.5px;line-height:20.5px;transform:scaleX(0.9883);color:#000;font-family:'Liberation Sans',sans-serif;">TODO</span>
<svg class="c" style="left:587.54px;top:834.04px;" width="45.20" height="27.30" viewBox="0 -1000 2152 1300" fill="#000"><text class="cj" x="0" y="0" font-size="1000" letter-spacing="-48">书签</text></svg>
<svg class="c" style="left:681.75px;top:833.83px;" width="45.20" height="27.30" viewBox="0 -1000 2152 1300" fill="#000"><text class="cj" x="0" y="0" font-size="1000" letter-spacing="-48">试题</text></svg>
<svg class="c" style="left:473.18px;top:872.26px;" width="25.20" height="27.30" viewBox="0 -1000 1200 1300" fill="#000"><text class="cj" x="0" y="0" font-size="1000">行</text></svg>
<span class="t" style="left:492.83px;top:875.04px;font-size:20.5px;line-height:20.5px;color:#000;font-family:'Liberation Sans',sans-serif;">:</span>
<span class="t" style="left:504.45px;top:875.04px;font-size:20.5px;line-height:20.5px;transform:scaleX(1.0886);color:#000;font-family:'Liberation Sans',sans-serif;">30</span>
<svg class="c" style="left:533.59px;top:872.13px;" width="25.20" height="27.30" viewBox="0 -1000 1200 1300" fill="#000"><text class="cj" x="0" y="0" font-size="1000">列</text></svg>
<span class="t" style="left:553.93px;top:875.04px;font-size:20.5px;line-height:20.5px;color:#000;font-family:'Liberation Sans',sans-serif;">:</span>
<span class="t" style="left:564.44px;top:875.04px;font-size:20.5px;line-height:20.5px;color:#000;font-family:'Liberation Sans',sans-serif;">1</span>
<svg class="c" style="left:583.35px;top:872.22px;" width="65.20" height="27.30" viewBox="0 -1000 3105 1300" fill="#000"><text class="cj" x="0" y="0" font-size="1000" letter-spacing="-48">已选择</text></svg>
<span class="t" style="left:648.58px;top:875.04px;font-size:20.5px;line-height:20.5px;transform:scaleX(1.0261);color:#000;font-family:'Liberation Sans',sans-serif;">:0</span>
<svg class="c" style="left:672.10px;top:872.26px;" width="65.20" height="27.30" viewBox="0 -1000 3105 1300" fill="#000"><text class="cj" x="0" y="0" font-size="1000" letter-spacing="-48">总行数</text></svg>
<span class="t" style="left:732.83px;top:875.04px;font-size:20.5px;line-height:20.5px;color:#000;font-family:'Liberation Sans',sans-serif;">:</span>
<span class="t" style="left:743.38px;top:875.04px;font-size:20.5px;line-height:20.5px;transform:scaleX(1.0464);color:#000;font-family:'Liberation Sans',sans-serif;">36</span>
<svg class="c" style="left:772.80px;top:872.35px;" width="65.20" height="27.30" viewBox="0 -1000 3105 1300" fill="#000"><text class="cj" x="0" y="0" font-size="1000" letter-spacing="-48">总长度</text></svg>
<span class="t" style="left:834.93px;top:875.04px;font-size:20.5px;line-height:20.5px;color:#000;font-family:'Liberation Sans',sans-serif;">:</span>
<span class="t" style="left:843.70px;top:875.04px;font-size:20.5px;line-height:20.5px;transform:scaleX(1.0596);color:#000;font-family:'Liberation Sans',sans-serif;">448</span>
<span class="t" style="left:917.16px;top:875.04px;font-size:20.5px;line-height:20.5px;transform:scaleX(1.0113);color:#000;font-family:'Liberation Sans',sans-serif;">AUTO(gbk)</span>
<svg class="c" style="left:1059.22px;top:872.24px;" width="45.20" height="27.30" viewBox="0 -1000 2152 1300" fill="#000"><text class="cj" x="0" y="0" font-size="1000" letter-spacing="-48">插入</text></svg>
<svg class="c" style="left:833.86px;top:827.44px;filter:drop-shadow(1.6px 1.8px 0.5px rgba(70,70,70,.75));" width="80.60" height="46.15" viewBox="0 -1000 2270 1300" fill="#fbfbfb"><text class="cj" x="0" y="0" font-size="1000" font-weight="bold" letter-spacing="70">知乎</text></svg>
<span class="t" style="left:916.83px;top:832.66px;font-size:33px;line-height:33px;transform:scaleX(1.0307);color:#fbfbfb;font-family:'Liberation Sans',sans-serif;text-shadow:1.6px 1.8px 0.8px rgba(70,70,70,.75);">@royqh1979</span>
<svg class="c" style="left:10px;top:10px;" width="20" height="19" viewBox="0 0 20 19">
<path d="M2.6 10V4.5L3 0.8L5.6 2.2Q10 0.6 14.4 2.2L17 0.8L17.4 4.5V10Z" fill="#d9722c"/>
<rect x="0" y="9.6" width="20" height="9.2" rx="2.2" fill="#d8601f"/>
<rect x="2.8" y="5.4" width="2.4" height="3" fill="#ffe9bf"/><rect x="14.8" y="5.4" width="2.4" height="3" fill="#ffe9bf"/>
<rect x="6.2" y="5" width="2.8" height="3.2" fill="#f6c98c"/><rect x="11" y="5" width="2.8" height="3.2" fill="#f6c98c"/>
<rect x="6.8" y="5.9" width="1.5" height="1.6" fill="#5a2a10"/><rect x="11.7" y="5.9" width="1.5" height="1.6" fill="#5a2a10"/>
<rect x="9.3" y="7.6" width="1.4" height="1.2" fill="#5a2a10"/>
<text x="10" y="17.4" font-family="Liberation Sans, sans-serif" font-weight="bold" font-size="8.2" text-anchor="middle" fill="#fff0cc" textLength="14.5" lengthAdjust="spacingAndGlyphs">DEV</text>
</svg>
<svg class="c" style="left:7px;top:83px;" width="4" height="17" viewBox="0 0 4 17"><rect x="0" y="0" width="1" height="1" fill="#cfcfcf"/><rect x="0" y="3.2" width="1" height="1" fill="#cfcfcf"/><rect x="0" y="6.4" width="1" height="1" fill="#cfcfcf"/><rect x="0" y="9.6" width="1" height="1" fill="#cfcfcf"/><rect x="0" y="12.8" width="1" height="1" fill="#cfcfcf"/><rect x="0" y="16" width="1" height="1" fill="#cfcfcf"/><rect x="3" y="0" width="1" height="1" fill="#cfcfcf"/><rect x="3" y="3.2" width="1" height="1" fill="#cfcfcf"/><rect x="3" y="6.4" width="1" height="1" fill="#cfcfcf"/><rect x="3" y="9.6" width="1" height="1" fill="#cfcfcf"/><rect x="3" y="12.8" width="1" height="1" fill="#cfcfcf"/><rect x="3" y="16" width="1" height="1" fill="#cfcfcf"/></svg>
<svg class="c" style="left:141px;top:83px;" width="4" height="17" viewBox="0 0 4 17"><rect x="0" y="0" width="1" height="1" fill="#cfcfcf"/><rect x="0" y="3.2" width="1" height="1" fill="#cfcfcf"/><rect x="0" y="6.4" width="1" height="1" fill="#cfcfcf"/><rect x="0" y="9.6" width="1" height="1" fill="#cfcfcf"/><rect x="0" y="12.8" width="1" height="1" fill="#cfcfcf"/><rect x="0" y="16" width="1" height="1" fill="#cfcfcf"/><rect x="3" y="0" width="1" height="1" fill="#cfcfcf"/><rect x="3" y="3.2" width="1" height="1" fill="#cfcfcf"/><rect x="3" y="6.4" width="1" height="1" fill="#cfcfcf"/><rect x="3" y="9.6" width="1" height="1" fill="#cfcfcf"/><rect x="3" y="12.8" width="1" height="1" fill="#cfcfcf"/><rect x="3" y="16" width="1" height="1" fill="#cfcfcf"/></svg>
<svg class="c" style="left:254.5px;top:83px;" width="4" height="17" viewBox="0 0 4 17"><rect x="0" y="0" width="1" height="1" fill="#cfcfcf"/><rect x="0" y="3.2" width="1" height="1" fill="#cfcfcf"/><rect x="0" y="6.4" width="1" height="1" fill="#cfcfcf"/><rect x="0" y="9.6" width="1" height="1" fill="#cfcfcf"/><rect x="0" y="12.8" width="1" height="1" fill="#cfcfcf"/><rect x="0" y="16" width="1" height="1" fill="#cfcfcf"/><rect x="3" y="0" width="1" height="1" fill="#cfcfcf"/><rect x="3" y="3.2" width="1" height="1" fill="#cfcfcf"/><rect x="3" y="6.4" width="1" height="1" fill="#cfcfcf"/><rect x="3" y="9.6" width="1" height="1" fill="#cfcfcf"/><rect x="3" y="12.8" width="1" height="1" fill="#cfcfcf"/><rect x="3" y="16" width="1" height="1" fill="#cfcfcf"/></svg>
<svg class="c" style="left:425px;top:83px;" width="4" height="17" viewBox="0 0 4 17"><rect x="0" y="0" width="1" height="1" fill="#cfcfcf"/><rect x="0" y="3.2" width="1" height="1" fill="#cfcfcf"/><rect x="0" y="6.4" width="1" height="1" fill="#cfcfcf"/><rect x="0" y="9.6" width="1" height="1" fill="#cfcfcf"/><rect x="0" y="12.8" width="1" height="1" fill="#cfcfcf"/><rect x="0" y="16" width="1" height="1" fill="#cfcfcf"/><rect x="3" y="0" width="1" height="1" fill="#cfcfcf"/><rect x="3" y="3.2" width="1" height="1" fill="#cfcfcf"/><rect x="3" y="6.4" width="1" height="1" fill="#cfcfcf"/><rect x="3" y="9.6" width="1" height="1" fill="#cfcfcf"/><rect x="3" y="12.8" width="1" height="1" fill="#cfcfcf"/><rect x="3" y="16" width="1" height="1" fill="#cfcfcf"/></svg>
<svg class="c" style="left:654.5px;top:83px;" width="4" height="17" viewBox="0 0 4 17"><rect x="0" y="0" width="1" height="1" fill="#cfcfcf"/><rect x="0" y="3.2" width="1" height="1" fill="#cfcfcf"/><rect x="0" y="6.4" width="1" height="1" fill="#cfcfcf"/><rect x="0" y="9.6" width="1" height="1" fill="#cfcfcf"/><rect x="0" y="12.8" width="1" height="1" fill="#cfcfcf"/><rect x="0" y="16" width="1" height="1" fill="#cfcfcf"/><rect x="3" y="0" width="1" height="1" fill="#cfcfcf"/><rect x="3" y="3.2" width="1" height="1" fill="#cfcfcf"/><rect x="3" y="6.4" width="1" height="1" fill="#cfcfcf"/><rect x="3" y="9.6" width="1" height="1" fill="#cfcfcf"/><rect x="3" y="12.8" width="1" height="1" fill="#cfcfcf"/><rect x="3" y="16" width="1" height="1" fill="#cfcfcf"/></svg>
<div style="left:211px;top:80px;width:1px;height:24px;background:#dcdcdc"></div>
<div style="left:382px;top:80px;width:1px;height:24px;background:#dcdcdc"></div>
<div style="left:611px;top:80px;width:1px;height:24px;background:#dcdcdc"></div>
<svg class="c" style="left:21px;top:80px;" width="18" height="22" viewBox="0 0 18 22"><defs><linearGradient id="gnf" x1="0" x2="1"><stop offset="0" stop-color="#fafafa"/><stop offset="1" stop-color="#d9d9d9"/></linearGradient></defs>
<path d="M2.6 1.6H10.6L16.4 7.6V19.2Q16.4 20.4 15.2 20.4H2.6Q1.6 20.4 1.6 19.2V2.8Q1.6 1.6 2.6 1.6Z" fill="url(#gnf)" stroke="#8b8b8b" stroke-width="1.2"/>
<path d="M10.6 1.6V7.6H16.4Z" fill="#fdfdfd" stroke="#8b8b8b" stroke-width="1.1" stroke-linejoin="round"/></svg>
<svg class="c" style="left:49px;top:81px;" width="20" height="21" viewBox="0 0 20 21">
<path d="M7.8 9.5V1.4H14.2L17.4 4.4V9Z" fill="#fbfdff" stroke="#5a5a5a" stroke-width="0.9"/>
<path d="M9.4 3.6H13.4M9.4 5.4H13.4M9.4 7.2H13.4" stroke="#7ba0b4" stroke-width="1"/>
<path d="M1 6.2L3.6 5L6.6 8.4L6 10.9L5.7 19.4L3.8 16.4Z" fill="#e9a83a" stroke="#3b2a10" stroke-width="0.9" stroke-linejoin="round"/>
<path d="M5.7 10.9L18.8 6.4V15L5.7 19.6Z" fill="#f7bb45" stroke="#3b2a10" stroke-width="1" stroke-linejoin="round"/>
</svg>
<svg class="c" style="left:77.5px;top:80.5px;" width="21.0" height="21.0" viewBox="0 0 21 21">
<path d="M0.6 0.6H18L19.6 1.6V5.4H18.6V19.9H0.6Z" fill="#f6c966" stroke="#2b1d05" stroke-width="1.1" stroke-linejoin="miter"/>
<path d="M3.6 0.8V12.4H16.8V0.8" fill="#fbfbfb" stroke="#2b1d05" stroke-width="1"/>
<path d="M4.4 19.6V14.6H15.6V19.6" fill="#a9b5a8" stroke="#2b1d05" stroke-width="1"/>
<rect x="11.6" y="16.2" width="2.6" height="3.4" fill="#2b1d05"/></svg>
<svg class="c" style="left:107px;top:80.5px;" width="15.54" height="15.54" viewBox="0 0 21 21">
<path d="M0.6 0.6H18L19.6 1.6V5.4H18.6V19.9H0.6Z" fill="#f2c56c" stroke="#6b5218" stroke-width="1.1" stroke-linejoin="miter"/>
<path d="M3.6 0.8V12.4H16.8V0.8" fill="#fbfbfb" stroke="#6b5218" stroke-width="1"/>
<path d="M4.4 19.6V14.6H15.6V19.6" fill="#a9b5a8" stroke="#6b5218" stroke-width="1"/>
<rect x="11.6" y="16.2" width="2.6" height="3.4" fill="#6b5218"/></svg>
<svg class="c" style="left:112px;top:85px;" width="15.54" height="15.54" viewBox="0 0 21 21">
<path d="M0.6 0.6H18L19.6 1.6V5.4H18.6V19.9H0.6Z" fill="#f2c56c" stroke="#6b5218" stroke-width="1.1" stroke-linejoin="miter"/>
<path d="M3.6 0.8V12.4H16.8V0.8" fill="#fbfbfb" stroke="#6b5218" stroke-width="1"/>
<path d="M4.4 19.6V14.6H15.6V19.6" fill="#a9b5a8" stroke="#6b5218" stroke-width="1"/>
<rect x="11.6" y="16.2" width="2.6" height="3.4" fill="#6b5218"/></svg>
<svg class="c" style="left:155px;top:83px;" width="18" height="13" viewBox="0 0 18 13"><path d="M16.6 6.5H2.2M7.2 1.2L1.8 6.5L7.2 11.8" stroke="#1b7fb6" stroke-width="1.7" fill="none" stroke-linecap="butt" stroke-linejoin="miter"/></svg>
<svg class="c" style="left:183.5px;top:83px;" width="18" height="13" viewBox="0 0 18 13"><path d="M1.4 6.5H15.8M10.8 1.2L16.2 6.5L10.8 11.8" stroke="#9a9a9a" stroke-width="1.7" fill="none"/></svg>
<svg class="c" style="left:220px;top:80px;" width="21" height="22" viewBox="0 0 21 22">
<path d="M1.2 1.4H8L12.4 5.8V16.4H1.2Z" fill="#fcfcfc" stroke="#4a4a4a" stroke-width="1.1"/>
<path d="M8 1.4V5.8H12.4" fill="none" stroke="#4a4a4a" stroke-width="1"/>
<path d="M2.6 4.2H6.6M2.6 7.4H8M2.6 10.6H6M2.6 13.6H6" stroke="#8a8a8a" stroke-width="1.3"/>
<circle cx="12.6" cy="13.8" r="6.7" fill="#e9f6f1" stroke="#1f2b29" stroke-width="1.3"/>
<path d="M9.6 17.6L12.6 9.2L15.6 17.6M10.7 14.9H14.5" fill="none" stroke="#e5607a" stroke-width="1.3"/></svg>
<svg class="c" style="left:267px;top:81px;" width="20" height="20" viewBox="0 0 20 20">
<path d="M0.5 0.5Q5 2 10 1.4V10H1.4Q2 5 0.5 0.5Z" fill="#c2c2c2" stroke="#a6a6a6" stroke-width="0.8"/>
<path d="M19.5 0.5Q15 2 10 1.4V10H18.6Q18 5 19.5 0.5Z" fill="#c6c6c6" stroke="#a6a6a6" stroke-width="0.8"/>
<path d="M0.5 19.5Q5 18 10 18.6V10H1.4Q2 15 0.5 19.5Z" fill="#c9c9c9" stroke="#a6a6a6" stroke-width="0.8"/>
<path d="M19.5 19.5Q15 18 10 18.6V10H18.6Q18 15 19.5 19.5Z" fill="#ebebeb" stroke="#a6a6a6" stroke-width="0.8"/>
<path d="M10 1.4V18.6M1.4 10H18.6" stroke="#979797" stroke-width="1.3" fill="none"/></svg>
<svg class="c" style="left:298px;top:82px;" width="16" height="18" viewBox="0 0 16 18"><path d="M0.3 0.6L15.6 8.6L0.3 16.9Z" fill="#9d9d9d"/></svg>
<svg class="c" style="left:325px;top:81px;" width="15.5" height="15.5" viewBox="0 0 20 20">
<path d="M0.5 0.5Q5 2 10 1.4V10H1.4Q2 5 0.5 0.5Z" fill="#c6c6c6" stroke="#b4b4b4" stroke-width="0.8"/>
<path d="M19.5 0.5Q15 2 10 1.4V10H18.6Q18 5 19.5 0.5Z" fill="#c9c9c9" stroke="#b4b4b4" stroke-width="0.8"/>
<path d="M0.5 19.5Q5 18 10 18.6V10H1.4Q2 15 0.5 19.5Z" fill="#c6c6c6" stroke="#b4b4b4" stroke-width="0.8"/>
<path d="M19.5 19.5Q15 18 10 18.6V10H18.6Q18 15 19.5 19.5Z" fill="#cfcfcf" stroke="#b4b4b4" stroke-width="0.8"/>
<path d="M10 1.4V18.6M1.4 10H18.6" stroke="#a8a8a8" stroke-width="1.3" fill="none"/></svg>
<svg class="c" style="left:335px;top:88px;" width="10" height="12" viewBox="0 0 10 12"><path d="M0.4 0.4L9.4 5.6L0.4 11.2Z" fill="#a9a9a9" stroke="#9c9c9c" stroke-width="0.6"/></svg>
<svg class="c" style="left:354px;top:81px;" width="20" height="20" viewBox="0 0 20 20">
<path d="M0.5 0.5Q5 2 10 1.4V10H1.4Q2 5 0.5 0.5Z" fill="#e2e2e2" stroke="#9f9f9f" stroke-width="0.8"/>
<path d="M19.5 0.5Q15 2 10 1.4V10H18.6Q18 5 19.5 0.5Z" fill="#e6e6e6" stroke="#9f9f9f" stroke-width="0.8"/>
<path d="M0.5 19.5Q5 18 10 18.6V10H1.4Q2 15 0.5 19.5Z" fill="#e6e6e6" stroke="#9f9f9f" stroke-width="0.8"/>
<path d="M19.5 19.5Q15 18 10 18.6V10H18.6Q18 15 19.5 19.5Z" fill="#ebebeb" stroke="#9f9f9f" stroke-width="0.8"/>
<path d="M10 1.4V18.6M1.4 10H18.6" stroke="#8f8f8f" stroke-width="1.3" fill="none"/></svg>
<svg class="c" style="left:391px;top:81px;" width="22" height="21" viewBox="0 0 22 21">
<path d="M1 1.2L10.5 8.4L1 15.6Z" fill="#22b524"/>
<path d="M20.14 9.57L20.14 12.83L18.07 12.88L17.10 14.90L18.35 16.55L15.80 18.58L14.48 16.99L12.28 17.49L11.78 19.50L8.60 18.77L9.01 16.75L7.26 15.35L5.37 16.20L3.96 13.26L5.80 12.32L5.80 10.08L3.96 9.14L5.37 6.20L7.26 7.05L9.01 5.65L8.60 3.63L11.78 2.90L12.28 4.91L14.48 5.41L15.80 3.82L18.35 5.85L17.10 7.50L18.07 9.52Z" fill="#dff0e8" stroke="#82958d" stroke-width="0.9" stroke-linejoin="round"/>
<circle cx="12.2" cy="11" r="2.5" fill="#e9f5ef" stroke="#4a5450" stroke-width="1.5"/></svg>
<svg class="c" style="left:438px;top:81px;" width="20.4" height="19.89" viewBox="0 0 20 19.5">
<path d="M6.2 0.3H13.2L15 6.2H4.4Z" fill="#a9a9a9"/>
<path d="M3.9 6H15.7Q17.6 12 15.4 16.2Q12.6 19 10 18.6Q6.6 19 4.3 16.2Q2.2 12 3.9 6Z" fill="#b2b2b2"/>
<path d="M9.9 6V18.6" stroke="#9a9a9a" stroke-width="1.1"/>
<path d="M4.2 7L0.6 5.2M15.6 7L19.4 5.2M3.6 10.8H0.5M16.2 10.8H19.5M4.9 15L1.2 18.7M14.9 15L18.8 18.7" stroke="#a9a9a9" stroke-width="1.5" fill="none" stroke-linecap="round"/></svg>
<svg class="c" style="left:466px;top:81px;" width="22" height="20" viewBox="0 0 22 20"><path d="M6.3 1.9H20.5M6.3 17.9H20.5" stroke="#e23a50" stroke-width="2.5"/><path d="M9 5.9H20.5M9 9.9H20.5M9 13.9H20.5" stroke="#1fa39d" stroke-width="2.4"/><path d="M3.7 1V16" stroke="#d4505e" stroke-width="1.3" fill="none"/><path d="M0.9 14L3.7 18.6L6.5 14Z" fill="#d4505e"/></svg>
<svg class="c" style="left:494px;top:81px;" width="22" height="20" viewBox="0 0 22 20"><path d="M7.5 1.9H21.3M7.5 17.9H21.3" stroke="#e23a50" stroke-width="2.5"/><path d="M10.2 5.9H21.3M10.2 9.9H21.3M10.2 13.9H21.3" stroke="#1fa39d" stroke-width="2.4"/><path d="M2.7 0.8V9.9H7" stroke="#d4505e" stroke-width="1.3" fill="none"/><path d="M6 7.1L10 9.9L6 12.7Z" fill="#d4505e"/></svg>
<svg class="c" style="left:524px;top:81px;" width="22" height="20" viewBox="0 0 22 20"><path d="M6.2 1.9H20.2M6.2 17.9H20.2" stroke="#e24a3c" stroke-width="2.5"/><path d="M9.4 5.9H20.2M9.4 9.9H20.2M9.4 13.9H20.2" stroke="#1fa39d" stroke-width="2.4"/><path d="M8.6 6.4H3.2V15" stroke="#e24a3c" stroke-width="1.3" fill="none"/><path d="M0.5 13.6L3.2 18.2L5.9 13.6Z" fill="#e24a3c"/></svg>
<svg class="c" style="left:554.3px;top:84.6px;" width="19" height="14.2" viewBox="0 0 19 14.2"><path d="M0.6 0.7L9.3 7.1L0.6 13.5Z M9.6 0.7L18.4 7.1L9.6 13.5Z" fill="#1fd2d2" stroke="#2a9d9d" stroke-width="0.8" stroke-linejoin="round"/></svg>
<div style="left:585px;top:83px;width:16px;height:16px;background:#f94141;border:1px solid #d84a4a"></div>
<svg class="c" style="left:620px;top:81px;" width="20" height="18.5" viewBox="0 0 20 18.5"><path d="M1 11.4Q1.2 17.4 5.6 17.4Q9.6 17.4 10 11.4Q10.4 17.4 14.4 17.4Q18.8 17.4 19 11.4" stroke="#e2495b" stroke-width="1.9" fill="#fdf1f2"/><path d="M0.2 11.3H19.8" stroke="#e2495b" stroke-width="2" fill="none"/><path d="M15.3 0.2V10.4M10.6 4.8H20" stroke="#1fa3a3" stroke-width="2.5" fill="none"/></svg>
<svg class="c" style="left:12.5px;top:172px;" width="21" height="20" viewBox="0 0 21 20">
<path d="M4 3.4Q4 1.4 6 1.4H13.6V12H4Z" fill="#d6d6d6" stroke="#8c8c8c" stroke-width="1"/>
<path d="M1.6 6.8Q1.6 4.6 3.8 4.6H16.2V15.4H3.2Q1.6 13 1.6 6.8Z" fill="#dcdcdc" stroke="#8c8c8c" stroke-width="1"/>
<path d="M5 11.4L8 8.4H19.4V19H5Z" fill="#e2e2e2" stroke="#8c8c8c" stroke-width="1"/>
<path d="M5 11.4H8V8.4" fill="none" stroke="#8c8c8c" stroke-width="0.9"/></svg>
<svg class="c" style="left:11px;top:266px" width="20" height="20" viewBox="0 0 20 20"><g transform="translate(0,20) rotate(-90)"><path d="M1 11.4Q1.2 17.4 5.6 17.4Q9.6 17.4 10 11.4Q10.4 17.4 14.4 17.4Q18.8 17.4 19 11.4" stroke="#e2495b" stroke-width="1.9" fill="#fdf1f2"/><path d="M0.2 11.3H19.8" stroke="#e2495b" stroke-width="2" fill="none"/><path d="M15.3 0.2V10.4M10.6 4.8H20" stroke="#1fa3a3" stroke-width="2.5" fill="none"/></g></svg>
<svg class="c" style="left:11px;top:359px;" width="22" height="22" viewBox="0 0 22 22"><path d="M5.3 1.5H9.7V5.3H13.5V9.7H9.7V13.5H5.3V9.7H1.5V5.3H5.3Z" fill="#c9a91e" stroke="#7d6c12" stroke-width="1" stroke-linejoin="round"/><path d="M13.100000000000001 8.6H17.5V12.399999999999999H21.3V16.8H17.5V20.6H13.100000000000001V16.8H9.3V12.399999999999999H13.100000000000001Z" fill="#cfae22" stroke="#7d6c12" stroke-width="1" stroke-linejoin="round"/></svg>
<svg class="c" style="left:14px;top:454px;" width="17" height="21" viewBox="0 0 17 21">
<path d="M3.6 13.4V5.6L5.8 1.2H13.8Q15 1.2 15 2.4V17.6Q15 19.2 13.6 19.2H1.8Q0.8 19.2 0.8 18V14.4Q0.8 13.4 1.8 13.4Z" fill="#f6b433" stroke="#8a5a14" stroke-width="1" stroke-linejoin="round"/>
<path d="M3.6 13.4L6.6 17.2V4L5.8 1.2" fill="none" stroke="#8a5a14" stroke-width="0.9"/></svg>
<svg class="c" style="left:16px;top:835px;" width="20" height="20" viewBox="0 0 20 20">
<path d="M0.6 0.6Q5 2 9.8 1.4V9.8H1.4Q2 5 0.6 0.6Z" fill="#f1616f" stroke="#a5303f" stroke-width="0.9"/>
<path d="M19.4 0.6Q15 2 10.2 1.4V9.8H18.6Q18 5 19.4 0.6Z" fill="#30e233" stroke="#1c7c1e" stroke-width="0.9"/>
<path d="M0.6 19.4Q5 18 9.8 18.6V10.2H1.4Q2 15 0.6 19.4Z" fill="#22e2e4" stroke="#118384" stroke-width="0.9"/>
<path d="M19.4 19.4Q15 18 10.2 18.6V10.2H18.6Q18 15 19.4 19.4Z" fill="#f8f162" stroke="#95932a" stroke-width="0.9"/>
<path d="M10 1.4V18.6M1.4 10H18.6" stroke="#1d5e20" stroke-width="1.2"/></svg>
<svg class="c" style="left:131px;top:836px;" width="18" height="18.5" viewBox="0 0 18 18.5">
<rect x="0.5" y="7.3" width="4" height="10.6" fill="#f03434" stroke="#a52323" stroke-width="0.8"/>
<rect x="4.6" y="3.6" width="4" height="14.3" fill="#55e356" stroke="#23832a" stroke-width="0.8"/>
<rect x="8.7" y="0.5" width="4.2" height="17.4" fill="#3b9bd9" stroke="#1c5d8c" stroke-width="0.8"/>
<rect x="13" y="5.4" width="3.8" height="12.5" fill="#f1e243" stroke="#a39425" stroke-width="0.8"/></svg>
<svg class="c" style="left:264px;top:836px;" width="20.0" height="19.5" viewBox="0 0 20 19.5">
<path d="M6.2 0.3H13.2L15 6.2H4.4Z" fill="#f08242"/>
<path d="M3.9 6H15.7Q17.6 12 15.4 16.2Q12.6 19 10 18.6Q6.6 19 4.3 16.2Q2.2 12 3.9 6Z" fill="#1fe473"/>
<path d="M9.9 6V18.6" stroke="#12b455" stroke-width="1.1"/>
<path d="M4.2 7L0.6 5.2M15.6 7L19.4 5.2M3.6 10.8H0.5M16.2 10.8H19.5M4.9 15L1.2 18.7M14.9 15L18.8 18.7" stroke="#3d8c5e" stroke-width="1.5" fill="none" stroke-linecap="round"/></svg>
<svg class="c" style="left:357px;top:835px;" width="21" height="20" viewBox="0 0 21 20">
<path d="M10.6 11.2L18.8 18.3" stroke="#b3a351" stroke-width="2.6" stroke-linecap="butt"/>
<path d="M17.4 17.1L18.8 18.3" stroke="#77703a" stroke-width="2.6"/>
<circle cx="7" cy="6.9" r="5.7" fill="#c9f1f2" stroke="#5c7c7d" stroke-width="1.1"/></svg>
<svg class="c" style="left:452.5px;top:836px;" width="18" height="18" viewBox="0 0 18 18">
<path d="M1 3.3L2.6 4.7L6 1.2" stroke="#8f8f8f" stroke-width="1.4" fill="none"/><path d="M8.4 3.9H17.2" stroke="#8f8f8f" stroke-width="1.5"/>
<path d="M1 9.3L2.6 10.7L6 7.2" stroke="#c14242" stroke-width="1.4" fill="none"/><path d="M8.4 9.9H17.2" stroke="#d65151" stroke-width="1.5"/>
<path d="M1 15.3L2.6 16.7L6 13.2" stroke="#3c5d9c" stroke-width="1.4" fill="none"/><path d="M8.4 15.9H17.2" stroke="#3f5f9f" stroke-width="1.5"/></svg>
<svg class="c" style="left:567px;top:835px;" width="15" height="20" viewBox="0 0 15 20"><defs><linearGradient id="gbk" x1="0" y1="0" x2="0" y2="1"><stop offset="0" stop-color="#c98c33"/><stop offset="1" stop-color="#e39b10"/></linearGradient></defs>
<rect x="0.6" y="0.6" width="13.4" height="18.2" rx="1.2" fill="url(#gbk)" stroke="#8c5c12" stroke-width="1"/>
<path d="M3 0.6H11V12.6L7 9L3 12.6Z" fill="#43d222" stroke="#2c6c12" stroke-width="0.9" stroke-linejoin="miter"/></svg>
<svg class="c" style="left:659px;top:835px;" width="19" height="19" viewBox="0 0 19 19">
<path d="M6.4 1.2H11.6V7.8L17.6 16.4Q18 17.6 16.8 17.6H1.2Q0 17.6 0.5 16.4L6.4 7.8Z" fill="#fdfdfd" stroke="#5b6b6b" stroke-width="1" stroke-linejoin="round"/>
<path d="M4.5 10.6H13.5L17.1 16.2Q17.4 17.1 16.6 17.1H1.4Q0.7 17.1 1 16.2Z" fill="#a9e9ea"/>
<path d="M4.3 10.6H13.7" stroke="#6d9c9c" stroke-width="0.8"/></svg>
<svg class="c" style="left:1128px;top:888px;" width="11" height="11" viewBox="0 0 11 11"><rect x="8" y="8" width="1.2" height="1.2" fill="#fbfbfb"/><rect x="7.2" y="7.2" width="1" height="1" fill="#c9c9c9"/><rect x="5" y="8" width="1.2" height="1.2" fill="#fbfbfb"/><rect x="4.2" y="7.2" width="1" height="1" fill="#c9c9c9"/><rect x="2" y="8" width="1.2" height="1.2" fill="#fbfbfb"/><rect x="1.2" y="7.2" width="1" height="1" fill="#c9c9c9"/><rect x="8" y="5" width="1.2" height="1.2" fill="#fbfbfb"/><rect x="7.2" y="4.2" width="1" height="1" fill="#c9c9c9"/><rect x="5" y="5" width="1.2" height="1.2" fill="#fbfbfb"/><rect x="4.2" y="4.2" width="1" height="1" fill="#c9c9c9"/><rect x="8" y="2" width="1.2" height="1.2" fill="#fbfbfb"/><rect x="7.2" y="1.2" width="1" height="1" fill="#c9c9c9"/></svg>
<div style="left:0px;top:0px;width:1140px;height:1px;background:#4c4c4c"></div>
<div style="left:0px;top:0px;width:1px;height:901px;background:#555"></div>
<div style="left:1px;top:1px;width:1px;height:900px;background:#cfcfcf"></div>
<div style="left:1138px;top:1px;width:1px;height:900px;background:#d4d4d4"></div>
<div style="left:1139px;top:0px;width:1px;height:901px;background:#585858"></div>
<div style="left:0px;top:900px;width:1140px;height:1px;background:#4a4a4a"></div>
</div>
</body></html>
